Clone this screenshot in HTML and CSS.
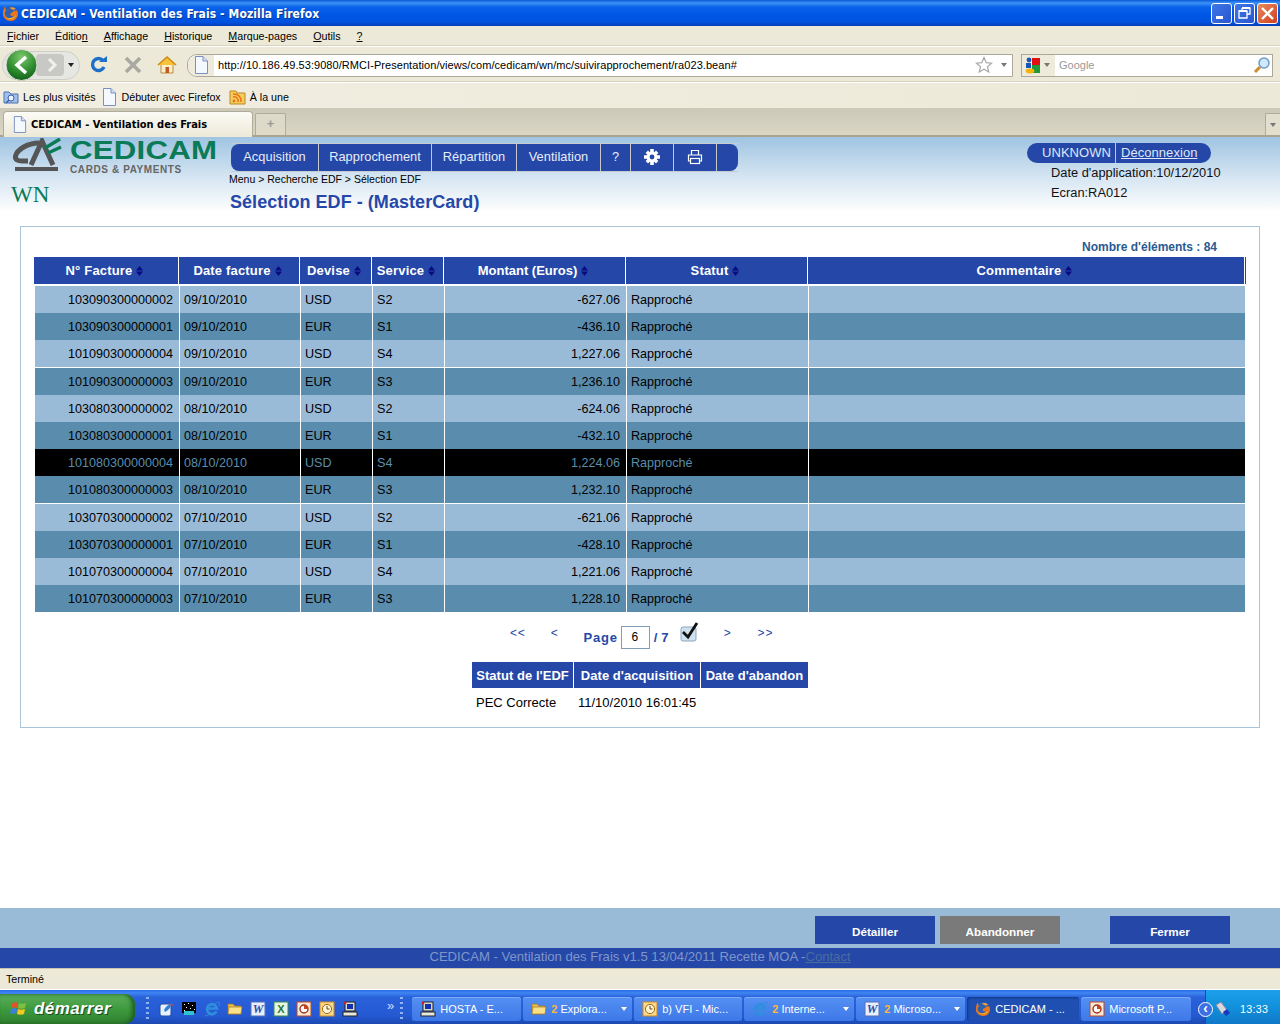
FILE: index.html
```html
<!DOCTYPE html>
<html lang="fr">
  <head>
    <meta charset="UTF-8" />
    <title>CEDICAM - Ventilation des Frais</title>
    <link rel="stylesheet" href="styles.css">
  </head>
  <body>
    <svg class="defs" width="0" height="0">
      <defs>
        <symbol id="page" viewBox="0 0 16 18">
          <path d="M2.5 .5H10L14.5 5V17.5H2.5Z" fill="#f4f8ff" stroke="#7b8fc0"/>
          <path d="M10 .5V5H14.5" fill="#d5e0f5" stroke="#7b8fc0"/>
        </symbol>
        <symbol id="fox" viewBox="0 0 16 16">
          <circle cx="8.5" cy="7.5" r="6.5" fill="#2f5fb0"/>
          <path d="M3 1C1 4 0 9 2 12c2 3 7 4 10 2 3-2 4-6 2-9-1 1-2 1-3 0 0 2-2 2-3 3-1 2 1 3 3 2-1 3-5 3-7 1C2 9 2.5 6 4 5.5 3 4 3 2 3 1Z" fill="#e8761b"/>
          <path d="M4 12c3 2.5 8 1.5 9.5-3-1.5 3-6 4-9.5 3Z" fill="#f8c030"/>
          <path d="M7 2.5C9 1.5 12 2 13 4L10 4.5Z" fill="#f0a030"/>
        </symbol>
        <symbol id="ie" viewBox="0 0 16 16">
          <path d="M12.5 10.5A5 5 0 1 1 13 7.5H4.5" fill="none" stroke="#2f8fdc" stroke-width="2.6"/>
          <path d="M2 14C0 16 3 15 7 12M11 3C15 0 16 1 15 5" fill="none" stroke="#2f8fdc" stroke-width="1"/>
        </symbol>
        <symbol id="folder" viewBox="0 0 16 16">
          <path d="M1 3H6L8 5H14V13H1Z" fill="#e8bc50" stroke="#a07820" stroke-width=".7"/>
          <path d="M2 6H15L14 13H1Z" fill="#fbe08a" stroke="#a07820" stroke-width=".7"/>
        </symbol>
        <symbol id="word" viewBox="0 0 16 16">
          <rect x="1" y="1" width="14" height="14" fill="#e8eefc" stroke="#5570b8"/>
          <text x="8" y="12" text-anchor="middle" font-family="Liberation Serif, serif" font-style="italic" font-weight="700" font-size="12" fill="#2a4ca8">W</text>
        </symbol>
        <symbol id="excel" viewBox="0 0 16 16">
          <rect x="1" y="1" width="14" height="14" fill="#e8f4e8" stroke="#3c8c48"/>
          <text x="8" y="12" text-anchor="middle" font-family="Liberation Sans, sans-serif" font-weight="700" font-size="11" fill="#1f7a30">X</text>
        </symbol>
        <symbol id="ppt" viewBox="0 0 16 16">
          <rect x="1" y="1" width="14" height="14" fill="#f8e8d8" stroke="#c04820"/>
          <circle cx="8" cy="8" r="4" fill="#fff" stroke="#a83010" stroke-width="1.4"/>
          <path d="M8 8V4A4 4 0 0 1 12 8Z" fill="#c04820"/>
        </symbol>
        <symbol id="clock" viewBox="0 0 16 16">
          <rect x="1" y="1" width="14" height="14" fill="#fbd88a" stroke="#d08a20"/>
          <circle cx="8" cy="8" r="4.6" fill="#fff6d8" stroke="#a06810"/>
          <path d="M8 5V8H10.5" fill="none" stroke="#704000"/>
        </symbol>
        <symbol id="pc" viewBox="0 0 16 16">
          <rect x="3" y="1" width="10" height="9" fill="#d8d8d0" stroke="#222"/>
          <rect x="5" y="3" width="6" height="5" fill="#1030b0"/>
          <rect x="1" y="11" width="14" height="4" fill="#e8e8e0" stroke="#222"/>
          <circle cx="3" cy="2" r="1.4" fill="#d02020"/>
        </symbol>
        <symbol id="sort" viewBox="0 0 7 10">
          <path d="M3.5 0L7 4.4H0Z" fill="#0a0a80"/>
          <path d="M3.5 10L0 5.6H7Z" fill="#0a0a80"/>
        </symbol>
      </defs>
    </svg>

    <div class="titlebar">
      <svg class="title-icon" width="17" height="17"><use href="#fox"/></svg>
      <span class="title-text">CEDICAM - Ventilation des Frais - Mozilla Firefox</span>
      <div class="win-btns">
        <span class="win-btn"><svg width="21" height="21" viewBox="0 0 21 21"><rect x="5" y="13" width="7" height="3" fill="#fff"/></svg></span>
        <span class="win-btn"><svg width="21" height="21" viewBox="0 0 21 21"><path d="M8 5H16V11H13M8 5V8M5 8H13V15H5Z" fill="none" stroke="#fff" stroke-width="1.3"/><path d="M8 5H16M5 8H13" stroke="#fff" stroke-width="2"/></svg></span>
        <span class="win-btn win-close"><svg width="21" height="21" viewBox="0 0 21 21"><path d="M5 5L16 16M16 5L5 16" stroke="#fff" stroke-width="2.4"/></svg></span>
      </div>
    </div>

    <div class="menubar">
      <span><u>F</u>ichier</span>
      <span>Éditio<u>n</u></span>
      <span><u>A</u>ffichage</span>
      <span><u>H</u>istorique</span>
      <span><u>M</u>arque-pages</span>
      <span><u>O</u>utils</span>
      <span><u>?</u></span>
    </div>

    <div class="navbar">
      <div class="back-group">
        <svg width="78" height="34" viewBox="0 0 78 34">
          <defs>
            <radialGradient id="backfill" cx=".5" cy=".25" r=".8">
              <stop offset="0" stop-color="#7cc86c"/>
              <stop offset=".6" stop-color="#2c8a2c"/>
              <stop offset="1" stop-color="#0f5a1a"/>
            </radialGradient>
          </defs>
          <rect x=".5" y="3.5" width="77" height="28" rx="14" fill="#e6e6e2" stroke="#cfcfc8"/>
          <rect x="34" y="6" width="28" height="22" rx="4" fill="#c8c8c4"/>
          <path d="M47 11L53 17L47 23" fill="none" stroke="#f0f0f0" stroke-width="3"/>
          <circle cx="19.5" cy="17" r="15.5" fill="url(#backfill)" stroke="#ddd"/>
          <path d="M24 9L15 17L24 25" fill="none" stroke="#fff" stroke-width="3.6"/>
          <path d="M66 15H72L69 19Z" fill="#222"/>
        </svg>
      </div>
      <svg class="nav-icon reload" width="20" height="20" viewBox="0 0 20 20"><path d="M15 12A6 6 0 1 1 14 5.5" fill="none" stroke="#1d6fc8" stroke-width="3.4"/><path d="M10 7H18V1Z" fill="#1d6fc8"/></svg>
      <svg class="nav-icon stop" width="20" height="20" viewBox="0 0 20 20"><path d="M3 3L17 17M17 3L3 17" stroke="#a9a9a4" stroke-width="3.6"/></svg>
      <svg class="nav-icon home" width="20" height="20" viewBox="0 0 20 20"><path d="M4 9V18H16V9" fill="#fbeec8" stroke="#b88a40"/><path d="M1 10L10 2L19 10" fill="#f5c33c" stroke="#d08a10" stroke-width="1.6"/><rect x="8.5" y="12" width="3.5" height="6" fill="#c05a20"/></svg>
      <div class="urlbar">
        <span class="url-page"><svg width="16" height="18"><use href="#page"/></svg></span>
        <span class="url-text">http://10.186.49.53:9080/RMCI-Presentation/views/com/cedicam/wn/mc/suivirapprochement/ra023.bean#</span>
        <svg width="18" height="18" viewBox="0 0 18 18"><path d="M9 1.5L11.2 6.6L16.6 7.1L12.5 10.7L13.8 16L9 13.2L4.2 16L5.5 10.7L1.4 7.1L6.8 6.6Z" fill="#fff" stroke="#aaa" stroke-width="1.2"/></svg>
        <span class="small-arrow url-arrow"></span>
      </div>
      <div class="searchbar">
        <span class="engine">
          <svg width="16" height="17" viewBox="0 0 16 17"><rect x="7" y="1" width="8" height="7" fill="#e01010"/><rect x="7" y="8" width="8" height="8" fill="#1f9a3a"/><circle cx="4" cy="3" r="2.4" fill="#1a55b8"/><rect x="1" y="6" width="5" height="5" fill="#1a55b8"/><ellipse cx="5" cy="14" rx="4.4" ry="2.4" fill="#f2b410"/></svg>
          <span class="small-arrow"></span>
        </span>
        <span class="search-text">Google</span>
        <svg width="18" height="18" viewBox="0 0 18 18"><path d="M7 11L2 16" stroke="#d08a30" stroke-width="3"/><circle cx="11" cy="7" r="5" fill="#cfe8fb" stroke="#6c9cc8" stroke-width="1.5"/></svg>
      </div>
    </div>

    <div class="bookmarks">
      <span class="bookmark"><svg width="16" height="16" viewBox="0 0 16 16"><path d="M1 3H6L8 5H15V14H1Z" fill="#9ec0ea" stroke="#5070b0"/><circle cx="8" cy="9" r="3" fill="#eaf3ff" stroke="#3a60a8"/><path d="M6 11L3 14" stroke="#3a60a8" stroke-width="1.5"/></svg>Les plus visités</span>
      <span class="bookmark"><svg width="16" height="18"><use href="#page"/></svg>Débuter avec Firefox</span>
      <span class="bookmark"><svg width="17" height="16" viewBox="0 0 17 16"><path d="M1 2H7L8 4H16V15H1Z" fill="#f6cc60" stroke="#b98a20"/><circle cx="5" cy="12" r="1.4" fill="#e87510"/><path d="M4 8A4 4 0 0 1 9 13M4 5A7 7 0 0 1 12 13" fill="none" stroke="#e87510" stroke-width="1.5"/></svg>À la une</span>
    </div>

    <div class="tabbar">
      <div class="tab"><svg width="15" height="17"><use href="#page"/></svg><span>CEDICAM - Ventilation des Frais</span></div>
      <div class="tab-new">+</div>
      <div class="tab-list"><span class="small-arrow"></span></div>
    </div>

    <main class="content">
      <header class="app-header">
        <div class="brand">
          <div class="logo">
            <svg width="52" height="35" viewBox="0 0 52 35">
              <path d="M28 5C16 5 6 12 4.5 18C4 22 7 23 11 23H17" fill="none" stroke="#555" stroke-width="5"/>
              <path d="M20 27L31 3L42 27" fill="none" stroke="#555" stroke-width="5"/>
              <path d="M34 10L49 1M37 15L50 9" fill="none" stroke="#0b7a56" stroke-width="3.5"/>
              <rect x="4" y="29" width="43" height="4" fill="#555"/>
            </svg>
            <div class="logo-words">
              <span class="logo-name">CEDICAM</span>
              <span class="logo-sub">CARDS &amp; PAYMENTS</span>
            </div>
          </div>
          <div class="wn">WN</div>
        </div>
        <div class="center-head">
          <nav class="mainmenu">
            <a class="m-acq">Acquisition</a>
            <a class="m-rap">Rapprochement</a>
            <a class="m-rep">Répartition</a>
            <a class="m-ven">Ventilation</a>
            <a class="m-help">?</a>
            <a class="m-gear"><svg width="18" height="18" viewBox="0 0 18 18"><path d="M9 3.6A5.4 5.4 0 1 0 9 14.4A5.4 5.4 0 1 0 9 3.6ZM9 6.6A2.4 2.4 0 1 1 9 11.4A2.4 2.4 0 1 1 9 6.6Z" fill="#fff" fill-rule="evenodd"/><path d="M7.2 1H10.8V4H7.2ZM7.2 14H10.8V17H7.2ZM1 7.2H4V10.8H1ZM14 7.2H17V10.8H14ZM2.6 5L5 2.6L7 4.6L4.6 7ZM11 13.4L13.4 11L15.4 13L13 15.4ZM13 2.6L15.4 5L13.4 7L11 4.6ZM4.6 11L7 13.4L5 15.4L2.6 13Z" fill="#fff"/></svg></a>
            <a class="m-print"><svg width="16" height="16" viewBox="0 0 16 16"><path d="M4.5 6V1.5H11.5V6M3.5 12H1.5V6H14.5V12H12.5" fill="none" stroke="#fff" stroke-width="1.2"/><rect x="3.5" y="9.5" width="9" height="5" fill="none" stroke="#fff" stroke-width="1.2"/></svg></a>
            <a class="last"></a>
          </nav>
          <div class="breadcrumb">Menu &gt; Recherche EDF &gt; Sélection EDF</div>
          <h1 class="page-title">Sélection EDF - (MasterCard)</h1>
        </div>
        <div class="user-head">
          <div class="user-pill"><span class="user-name">UNKNOWN</span><a>Déconnexion</a></div>
          <div class="user-info">Date d'application:10/12/2010</div>
          <div class="user-info">Ecran:RA012</div>
        </div>
      </header>

      <section class="panel">
        <div class="count">Nombre d'éléments : 84</div>
        <div class="grid-row head-row">
          <div>N° Facture <svg width="7" height="10"><use href="#sort"/></svg></div>
          <div>Date facture <svg width="7" height="10"><use href="#sort"/></svg></div>
          <div>Devise <svg width="7" height="10"><use href="#sort"/></svg></div>
          <div>Service <svg width="7" height="10"><use href="#sort"/></svg></div>
          <div class="head-tight">Montant (Euros) <svg width="7" height="10"><use href="#sort"/></svg></div>
          <div>Statut <svg width="7" height="10"><use href="#sort"/></svg></div>
          <div>Commentaire <svg width="7" height="10"><use href="#sort"/></svg></div>
        </div>
        <div class="rows">
          <div class="grid-row row light"><div class="num">103090300000002</div><div>09/10/2010</div><div>USD</div><div>S2</div><div class="num">-627.06</div><div>Rapproché</div><div></div></div>
          <div class="grid-row row dark"><div class="num">103090300000001</div><div>09/10/2010</div><div>EUR</div><div>S1</div><div class="num">-436.10</div><div>Rapproché</div><div></div></div>
          <div class="grid-row row light"><div class="num">101090300000004</div><div>09/10/2010</div><div>USD</div><div>S4</div><div class="num">1,227.06</div><div>Rapproché</div><div></div></div>
          <div class="grid-row row dark"><div class="num">101090300000003</div><div>09/10/2010</div><div>EUR</div><div>S3</div><div class="num">1,236.10</div><div>Rapproché</div><div></div></div>
          <div class="grid-row row light"><div class="num">103080300000002</div><div>08/10/2010</div><div>USD</div><div>S2</div><div class="num">-624.06</div><div>Rapproché</div><div></div></div>
          <div class="grid-row row dark"><div class="num">103080300000001</div><div>08/10/2010</div><div>EUR</div><div>S1</div><div class="num">-432.10</div><div>Rapproché</div><div></div></div>
          <div class="grid-row row selected"><div class="num">101080300000004</div><div>08/10/2010</div><div>USD</div><div>S4</div><div class="num">1,224.06</div><div>Rapproché</div><div></div></div>
          <div class="grid-row row dark"><div class="num">101080300000003</div><div>08/10/2010</div><div>EUR</div><div>S3</div><div class="num">1,232.10</div><div>Rapproché</div><div></div></div>
          <div class="grid-row row light"><div class="num">103070300000002</div><div>07/10/2010</div><div>USD</div><div>S2</div><div class="num">-621.06</div><div>Rapproché</div><div></div></div>
          <div class="grid-row row dark"><div class="num">103070300000001</div><div>07/10/2010</div><div>EUR</div><div>S1</div><div class="num">-428.10</div><div>Rapproché</div><div></div></div>
          <div class="grid-row row light"><div class="num">101070300000004</div><div>07/10/2010</div><div>USD</div><div>S4</div><div class="num">1,221.06</div><div>Rapproché</div><div></div></div>
          <div class="grid-row row dark"><div class="num">101070300000003</div><div>07/10/2010</div><div>EUR</div><div>S3</div><div class="num">1,228.10</div><div>Rapproché</div><div></div></div>
        </div>

        <div class="pager">
          <a class="p-first">&lt;&lt;</a>
          <a class="p-prev">&lt;</a>
          <span class="p-label">Page</span>
          <span class="p-input">6</span>
          <span class="p-total">/ 7</span>
          <svg class="p-check" width="19" height="20" viewBox="0 0 19 20"><rect x="1" y="5" width="15" height="14" rx="2" fill="#cfe0ee" stroke="#8aa8c0"/><path d="M3 10L8 15L17 1" fill="none" stroke="#111" stroke-width="2.8"/></svg>
          <a class="p-next">&gt;</a>
          <a class="p-last">&gt;&gt;</a>
        </div>

        <div class="info-table">
          <div class="info-head">
            <div>Statut de l'EDF</div>
            <div>Date d'acquisition</div>
            <div>Date d'abandon</div>
          </div>
          <div class="info-row">
            <div>PEC Correcte</div>
            <div>11/10/2010 16:01:45</div>
            <div></div>
          </div>
        </div>
      </section>

      <div class="actions">
        <a class="btn">Détailler</a>
        <a class="btn btn-off">Abandonner</a>
        <a class="btn btn-close">Fermer</a>
      </div>
      <footer class="app-footer">CEDICAM - Ventilation des Frais v1.5 13/04/2011 Recette MOA -<a>Contact</a></footer>
    </main>

    <div class="statusbar">Terminé</div>

    <div class="taskbar">
      <div class="start">
        <svg width="18" height="18" viewBox="0 0 18 18"><path d="M2 4C4 2 6 2 8 3L7 8C5 7 3 7 1 8Z" fill="#e8502a"/><path d="M9 3C11 4 13 4 16 3L15 8C13 9 10 9 8 8Z" fill="#7cc040"/><path d="M1 9C3 8 5 8 7 9L6 14C4 13 2 13 0 14Z" fill="#3a80e0"/><path d="M8 9C10 10 12 10 15 9L14 14C12 15 9 15 7 14Z" fill="#f8c820"/></svg>
        <span>démarrer</span>
      </div>
      <div class="grip"></div>
      <div class="quick">
        <svg width="16" height="16" viewBox="0 0 16 16"><rect x="2" y="3" width="11" height="12" rx="2" fill="#e8f0ff" stroke="#2050a0"/><path d="M6 9C8 5 11 3 14 2C13 6 11 9 7 11Z" fill="#2f80d8"/><path d="M12 4H16" stroke="#e04020"/></svg>
        <svg width="16" height="16" viewBox="0 0 16 16"><rect x="1" y="1" width="14" height="11" fill="#000"/><path d="M3 3h1v1H3zM7 2h1v1H7zM11 4h1v1h-1zM5 6h1v1H5zM9 7h1v1H9zM13 8h1v1h-1zM3 9h1v1H3z" fill="#fff"/><rect x="3" y="10" width="10" height="4" fill="#30c0d0"/></svg>
        <svg width="16" height="16"><use href="#ie"/></svg>
        <svg width="16" height="16"><use href="#folder"/></svg>
        <svg width="16" height="16"><use href="#word"/></svg>
        <svg width="16" height="16"><use href="#excel"/></svg>
        <svg width="16" height="16"><use href="#ppt"/></svg>
        <svg width="16" height="16"><use href="#clock"/></svg>
        <svg width="16" height="16"><use href="#pc"/></svg>
      </div>
      <span class="more">»</span>
      <div class="grip grip2"></div>
      <div class="tasks">
        <div class="task t-host"><svg width="16" height="16"><use href="#pc"/></svg><span>HOSTA - E...</span></div>
        <div class="task t-group t-expl"><svg width="16" height="16"><use href="#folder"/></svg><span><b>2</b> Explora...</span><i class="task-arrow"></i></div>
        <div class="task t-vfi"><svg width="16" height="16"><use href="#clock"/></svg><span>b) VFI - Mic...</span></div>
        <div class="task t-group t-inter"><svg width="16" height="16"><use href="#ie"/></svg><span><b>2</b> Interne...</span><i class="task-arrow"></i></div>
        <div class="task t-group t-word"><svg width="16" height="16"><use href="#word"/></svg><span><b>2</b> Microso...</span><i class="task-arrow"></i></div>
        <div class="task active t-cedi"><svg width="16" height="16"><use href="#fox"/></svg><span>CEDICAM - ...</span></div>
        <div class="task t-ppt"><svg width="16" height="16"><use href="#ppt"/></svg><span>Microsoft P...</span></div>
      </div>
      <div class="tray">
        <span class="tray-btn">‹</span>
        <svg width="18" height="18" viewBox="0 0 18 18"><path d="M3 5L8 2L14 10L9 14Z" fill="#d8d8e0" stroke="#889"/><path d="M10 12L14 9L17 13L13 16Z" fill="#1838c0"/></svg>
        <span class="clock">13:33</span>
      </div>
    </div>
  </body>
</html>
```

FILE: styles.css
```css
* {
  box-sizing: border-box;
}

html,
body {
  margin: 0;
  height: 1024px;
  overflow: hidden;
}

body {
  display: flex;
  flex-direction: column;
  width: 1280px;
  font-family: "Liberation Sans", Arial, sans-serif;
  font-size: 10.7px;
  color: #000;
  background: #ece9d8;
}

.defs {
  position: absolute;
}

/* window title */
.titlebar {
  height: 26px;
  display: flex;
  align-items: center;
  padding: 0 2px 0 2px;
  background: linear-gradient(#0a58d8 0, #3d93f8 3px, #0a62ea 7px, #0055e5 16px, #0153e0 22px, #0040b8 26px);
}

.title-text {
  margin: 1px 0 0 2px;
  color: #fff;
  font-family: "DejaVu Sans Condensed", "DejaVu Sans", sans-serif;
  font-weight: 700;
  font-size: 12px;
  letter-spacing: .1px;
  text-shadow: 1px 1px #0a3a90;
  white-space: nowrap;
}

.win-btns {
  margin-left: auto;
  display: flex;
  gap: 2px;
}

.win-btn {
  width: 21px;
  height: 21px;
  border: 1px solid #fff;
  border-radius: 3px;
  background: linear-gradient(135deg, #3c78e8, #2a55d0);
  display: flex;
}

.win-btn svg {
  margin: -1px;
}

.win-close {
  background: linear-gradient(135deg, #e88a60, #d0401c);
}

/* firefox menus */
.menubar {
  height: 20px;
  display: flex;
  align-items: center;
  gap: 16px;
  padding-left: 7px;
  border-bottom: 1px solid #d6d2bd;
  white-space: nowrap;
}

.navbar {
  height: 36px;
  display: flex;
  align-items: center;
  border-top: 1px solid #fff;
  border-bottom: 1px solid #d6d2bd;
  padding: 2px 0 0 2px;
}

.back-group {
  width: 78px;
  height: 34px;
}

.nav-icon {
  flex: none;
}

.reload {
  margin-left: 9px;
}

.stop {
  margin-left: 14px;
}

.home {
  margin-left: 14px;
}

.urlbar {
  width: 826px;
  height: 23px;
  margin-left: 10px;
  display: flex;
  align-items: center;
  background: #fff;
  border: 1px solid #aca899;
  border-radius: 10px 0 0 10px;
  padding-right: 5px;
}

.url-page {
  width: 26px;
  height: 21px;
  display: flex;
  align-items: center;
  justify-content: center;
  background: #eeebdc;
  border-radius: 10px 0 0 10px;
  margin-right: 4px;
}

.url-text {
  flex: 1;
  white-space: nowrap;
  font-size: 11px;
  letter-spacing: .06px;
}

.small-arrow {
  display: inline-block;
  border: 3px solid transparent;
  border-top: 4px solid #777;
  border-bottom: 0;
}

.url-arrow {
  margin-left: 8px;
}

.searchbar {
  width: 252px;
  height: 23px;
  margin-left: 8px;
  display: flex;
  align-items: center;
  background: #fff;
  border: 1px solid #aca899;
  padding-right: 1px;
}

.engine {
  width: 33px;
  height: 21px;
  display: flex;
  align-items: center;
  gap: 3px;
  padding-left: 3px;
  background: #eeebdc;
}

.search-text {
  flex: 1;
  margin-left: 4px;
  color: #999;
  font-size: 11px;
}

.bookmarks {
  height: 26px;
  display: flex;
  align-items: center;
  gap: 6px;
  padding: 3px 0 0 3px;
  border-top: 1px solid #fff;
  background: linear-gradient(90deg, #f1eee2, #ece9d8);
}

.bookmark {
  display: flex;
  align-items: center;
  gap: 4px;
  white-space: nowrap;
}

.bookmark:nth-child(3) {
  margin-left: 2px;
}

.tabbar {
  height: 29px;
  display: flex;
  align-items: flex-end;
  padding-left: 3px;
  background: linear-gradient(#ccc8b8, #dad6c6);
  border-bottom: 2px solid #a8a490;
}

.tab {
  width: 250px;
  height: 26px;
  margin-bottom: -2px;
  display: flex;
  align-items: center;
  gap: 4px;
  padding-left: 8px;
  background: linear-gradient(#fcfbf5, #ece9d8);
  border: 1px solid #b0ac9a;
  border-bottom: 0;
  border-radius: 4px 4px 0 0;
  font-family: "DejaVu Sans Condensed", "DejaVu Sans", sans-serif;
  font-weight: 700;
  font-size: 11px;
  white-space: nowrap;
}

.tab-new {
  width: 31px;
  height: 22px;
  margin-left: 2px;
  border: 1px solid #b0ac9a;
  border-bottom: 0;
  border-radius: 2px 2px 0 0;
  background: #dedac9;
  color: #999;
  font-size: 13px;
  font-weight: 700;
  line-height: 19px;
  text-align: center;
}

.tab-list {
  width: 15px;
  height: 22px;
  margin-left: auto;
  border: 1px solid #b0ac9a;
  border-right: 0;
  border-bottom: 0;
  background: #e2dfcf;
  display: flex;
  align-items: center;
  justify-content: center;
}

/* application */
.content {
  flex: 1;
  display: flex;
  flex-direction: column;
  min-height: 0;
  background: linear-gradient(#9fc4e2 0, #d5e5f2 40px, #fff 75px);
}

.app-header {
  height: 89px;
  display: flex;
}

.brand {
  width: 229px;
  padding: 1px 0 0 11px;
  flex: none;
}

.logo {
  display: flex;
  gap: 7px;
}

.logo-words {
  display: flex;
  flex-direction: column;
}

.logo-name {
  display: block;
  color: #0b7a56;
  font-weight: 700;
  font-size: 26px;
  line-height: 25px;
  letter-spacing: .2px;
  white-space: nowrap;
  transform: scaleX(1.2);
  transform-origin: 0 0;
}

.logo-sub {
  margin-top: 1px;
  color: #666;
  font-weight: 700;
  font-size: 10px;
  line-height: 11px;
  letter-spacing: .6px;
  white-space: nowrap;
}

.wn {
  margin-top: 7px;
  color: #0b7a56;
  font-family: "Liberation Serif", serif;
  font-size: 23px;
  line-height: 26px;
}

.center-head {
  width: 798px;
  flex: none;
}

.mainmenu {
  width: 507px;
  height: 29px;
  margin: 6px 0 0 2px;
  display: flex;
  border-top: 1px solid #c8ccd0;
  border-bottom: 1px solid #c8ccd0;
  color: #e8edf8;
  font-size: 12.8px;
  letter-spacing: .05px;
}

.mainmenu a {
  height: 27px;
  display: flex;
  align-items: center;
  justify-content: center;
  padding-bottom: 2px;
  background: #2548a8;
  border-right: 1px solid #c4c8cc;
}

.m-acq { width: 88px; border-radius: 8px 0 0 8px; }
.m-rap { width: 113px; }
.m-rep { width: 85px; }
.m-ven { width: 84px; }
.m-help { width: 30px; }
.m-gear { width: 43px; }
.m-print { width: 43px; }

.mainmenu .last {
  width: 21px;
  border-right: 0;
  border-radius: 0 8px 8px 0;
}

.breadcrumb {
  font-size: 10.5px;
  line-height: 15px;
}

.page-title {
  margin: 4px 0 0 1px;
  color: #2548a8;
  font-size: 18px;
  font-weight: 700;
  line-height: 22px;
  letter-spacing: .05px;
}

.user-head {
  flex: 1;
  padding-top: 6px;
}

.user-pill {
  width: 184px;
  height: 20px;
  display: flex;
  align-items: center;
  padding-bottom: 1px;
  background: #2548a8;
  border-radius: 10px;
  color: #dfe6f5;
  font-size: 13px;
  letter-spacing: .05px;
}

.user-name {
  width: 89px;
  height: 20px;
  padding-left: 15px;
  line-height: 19px;
  border-right: 1px solid #c4c8cc;
}

.user-pill a {
  margin-left: 5px;
  text-decoration: underline;
}

.user-info {
  margin-left: 24px;
  font-size: 12.85px;
  line-height: 20px;
  color: #111;
}

.panel {
  height: 502px;
  margin: 0 20px;
  border: 1px solid #aac4da;
  background: #fff;
}

.count {
  height: 30px;
  padding: 13px 42px 0 0;
  text-align: right;
  color: #2a5a92;
  font-weight: 700;
  font-size: 12px;
  line-height: 14px;
}

.grid-row {
  display: grid;
  grid-template-columns: 144px 120px 71px 71px 181px 181px 436px;
  column-gap: 1px;
}

.head-row {
  height: 27px;
  margin-left: 13px;
  width: 1212px;
  background: #2548a8;
  color: #fff;
  font-weight: 700;
  font-size: 13px;
  letter-spacing: .17px;
}

.head-row > div {
  display: flex;
  align-items: center;
  justify-content: center;
  gap: 4px;
  padding-right: 3px;
  white-space: nowrap;
  box-shadow: 1px 0 #fff;
}

.head-row > .head-tight {
  letter-spacing: 0;
}

.rows {
  margin: 2px 0 0 14px;
  width: 1211px;
  display: flex;
  flex-direction: column;
  gap: 1px;
}

.row {
  height: 26.2px;
  font-size: 12.6px;
  background: #fff;
}

.row > div {
  padding: 1px 0 0 4px;
  line-height: 26px;
  white-space: nowrap;
}

.row > div.num {
  padding: 1px 6px 0 0;
  text-align: right;
}

.light > div {
  background: #9abbd8;
}

.dark > div {
  background: #5a8dad;
}

.selected > div {
  background: #000;
  color: #5a8dad;
}

.pager {
  height: 51px;
  padding-top: 1px;
  display: flex;
  align-items: flex-start;
  color: #2548a8;
  font-size: 12px;
  letter-spacing: .8px;
}

.pager a {
  margin-top: 13px;
  line-height: 16px;
  white-space: nowrap;
}

.p-first { margin-left: 489px; }
.p-prev { margin-left: 25px; }

.p-label {
  margin: 18px 0 0 25px;
  font-weight: 700;
  font-size: 13px;
  line-height: 16px;
}

.p-input {
  width: 29px;
  height: 23px;
  margin: 14px 0 0 3px;
  border: 1px solid #7f9db9;
  color: #000;
  text-align: center;
  line-height: 21px;
}

.p-total {
  margin: 18px 0 0 4px;
  font-weight: 700;
  font-size: 13px;
  line-height: 16px;
  letter-spacing: .2px;
}

.p-check {
  margin: 10px 0 0 11px;
}

.p-next { margin-left: 25px; }
.p-last { margin-left: 26px; }

.info-table {
  width: 336px;
  margin-left: 451px;
}

.info-head,
.info-row {
  display: grid;
  grid-template-columns: 101px 126px 107px;
  column-gap: 1px;
}

.info-head {
  height: 26px;
  background: #2548a8;
  color: #fff;
  font-weight: 700;
  font-size: 13px;
  letter-spacing: .05px;
  line-height: 27px;
  text-align: center;
  white-space: nowrap;
}

.info-head > div {
  box-shadow: 1px 0 #fff;
}

.info-row {
  margin-top: 1px;
  font-size: 13px;
  line-height: 28px;
  white-space: nowrap;
}

.info-row > div {
  padding-left: 4px;
}

.actions {
  margin-top: auto;
  height: 40px;
  display: flex;
  align-items: flex-start;
  padding: 8px 0 0 815px;
  gap: 5px;
  background: #9abbd8;
}

.btn {
  width: 120px;
  height: 28px;
  background: #2548a8;
  color: #fff;
  font-weight: 700;
  font-size: 11.7px;
  line-height: 32px;
  text-align: center;
}

.btn-off {
  background: #7a7a7a;
}

.btn-close {
  margin-left: 45px;
}

.app-footer {
  height: 20px;
  background: #2548a8;
  color: #7f97c8;
  font-size: 13.1px;
  line-height: 18px;
  text-align: center;
}

.app-footer a {
  color: #4a6da0;
  text-decoration: underline;
}

.statusbar {
  height: 22px;
  padding-left: 6px;
  line-height: 21px;
  border-top: 1px solid #c8c4b0;
  border-bottom: 1px solid #fff;
  background: #ece9d8;
}

/* windows taskbar */
.taskbar {
  height: 34px;
  display: flex;
  align-items: center;
  padding-top: 4px;
  background: linear-gradient(#2a6be8 0, #3f86f2 3px, #2a62dc 7px, #2459d2 26px, #1c48b0 34px);
  color: #fff;
}

.start {
  width: 135px;
  height: 30px;
  display: flex;
  align-items: center;
  gap: 6px;
  padding-left: 10px;
  background: linear-gradient(#5cae5c, #3e9a3e 50%, #2f7f2f);
  border-radius: 0 10px 10px 0;
  box-shadow: inset -3px 0 4px #1e5e1e;
  font-style: italic;
  font-weight: 700;
  font-size: 17px;
  letter-spacing: .4px;
  text-shadow: 1px 1px #1e4e1e;
}

.grip {
  width: 3px;
  height: 24px;
  margin-left: 11px;
  background: repeating-linear-gradient(#8fb4f0 0 2px, transparent 2px 5px);
}

.quick {
  width: 222px;
  display: flex;
  gap: 7px;
  padding-left: 9px;
}

.more {
  margin: -8px 0 0 16px;
  color: #cfe0ff;
  font-size: 13px;
}

.grip2 {
  margin-left: 6px;
}

.tasks {
  display: flex;
  margin-left: 9px;
  gap: 2px;
}

.task {
  height: 24px;
  display: flex;
  align-items: center;
  gap: 4px;
  padding-left: 8px;
  position: relative;
  background: linear-gradient(#5590f4, #3d78e8);
  border-radius: 3px;
  box-shadow: inset 0 1px #7caaf8;
  font-size: 11px;
  white-space: nowrap;
}

.task b {
  color: #f8b840;
}

.t-host { width: 109px; }
.t-expl { width: 109px; }
.t-vfi { width: 108px; }
.t-inter { width: 110px; }
.t-word { width: 109px; }
.t-cedi { width: 112px; }
.t-ppt { width: 110px; }

.active {
  background: #1f4fb0;
  box-shadow: inset 1px 1px 2px #123a88;
}

.task-arrow {
  position: absolute;
  right: 5px;
  top: 10px;
  border: 3px solid transparent;
  border-top: 4px solid #fff;
  border-bottom: 0;
}

.tray {
  width: 75px;
  height: 34px;
  margin: -4px 0 0 auto;
  padding-top: 4px;
  display: flex;
  align-items: center;
  background: linear-gradient(#1ca0ea, #1290dc 50%, #0f78c8);
  border-left: 1px solid #0f4fa8;
}

.tray-btn {
  width: 15px;
  height: 15px;
  margin-left: -8px;
  border-radius: 50%;
  background: #3a70e0;
  border: 1px solid #fff;
  font-weight: 700;
  font-size: 14px;
  line-height: 11px;
  text-align: center;
}

.clock {
  margin-left: 9px;
  letter-spacing: .3px;
}
```
